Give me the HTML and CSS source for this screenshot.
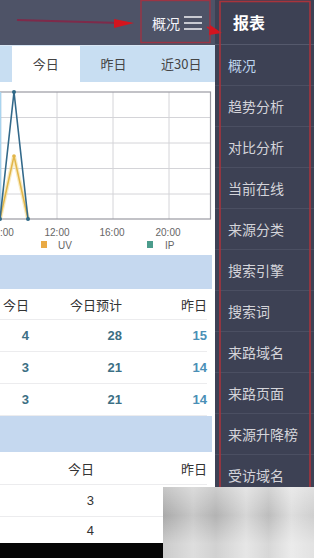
FILE: index.html
```html
<!DOCTYPE html>
<html lang="zh-CN">
    <head>
        <meta charset="utf-8">
        <title>概况</title>
        <link rel="stylesheet" href="styles.css">
    </head>
    <body>
        <div class="screen">
            <!-- Main report column -->
            <div class="main">
                <div class="topbar">
                    <span class="topbar-title">概况</span>
                    <svg class="menu-icon" width="20" height="18" viewBox="0 0 20 18">
                        <path d="M1 3H19M1 9H19M1 15H19" stroke="#f2f2f6" stroke-width="1.3"/>
                    </svg>
                </div>
                <div class="tabs">
                    <span class="tab tab-active">今日</span>
                    <span class="tab">昨日</span>
                    <span class="tab">近30日</span>
                </div>
                <div class="chart">
                    <svg width="215" height="173" viewBox="0 0 215 173">
                        <g stroke="#d4d4d8" stroke-width="1" fill="none">
                            <path d="M0 35.5H210M0 61H210M0 86.5H210M0 112H210"/>
                            <path d="M57 10V137M113 10V137M169 10V137"/>
                        </g>
                        <rect x="0.5" y="10" width="210" height="127" fill="none" stroke="#9a9aa2" stroke-width="1.2"/>
                        <path d="M0.5 10V137" stroke="#a9d4ef" stroke-width="1.5"/>
                        <polyline points="0,137 14,74 28,137" fill="none" stroke="#f3dd9a" stroke-width="4" opacity="0.6"/>
                        <polyline points="0,137 14,74 28,137" fill="none" stroke="#e2b64a" stroke-width="1.5"/>
                        <polyline points="0,137 14,10 28,137" fill="none" stroke="#33698a" stroke-width="1.6"/>
                        <g fill="#2f6886">
                            <circle cx="14" cy="10" r="2"/>
                            <circle cx="28" cy="137" r="2"/>
                            <circle cx="0" cy="137" r="2"/>
                        </g>
                        <circle cx="14" cy="74" r="1.8" fill="#e2b64a"/>
                        <g class="axis-label">
                            <text x="0" y="154">:00</text>
                            <text x="57" y="154" text-anchor="middle">12:00</text>
                            <text x="112" y="154" text-anchor="middle">16:00</text>
                            <text x="168" y="154" text-anchor="middle">20:00</text>
                            <text x="58" y="167">UV</text>
                            <text x="165" y="167">IP</text>
                        </g>
                        <rect x="41" y="159" width="6" height="7" fill="#e9aa45"/>
                        <rect x="147" y="159" width="6" height="7" fill="#4b9c8c"/>
                    </svg>
                </div>

                <div class="band"></div>
                <div class="table table-three">
                    <div class="row row-head">
                        <span>今日</span><span>今日预计</span><span>昨日</span>
                    </div>
                    <div class="row">
                        <span class="num">4</span><span class="num">28</span><span class="num num-light">15</span>
                    </div>
                    <div class="row">
                        <span class="num">3</span><span class="num">21</span><span class="num num-light">14</span>
                    </div>
                    <div class="row">
                        <span class="num">3</span><span class="num">21</span><span class="num num-light">14</span>
                    </div>
                </div>

                <div class="band band-tall"></div>
                <div class="table table-two">
                    <div class="row row-head row-tall">
                        <span>今日</span><span>昨日</span>
                    </div>
                    <div class="row">
                        <span class="plain">3</span><span></span>
                    </div>
                    <div class="row row-short">
                        <span class="plain">4</span><span></span>
                    </div>
                </div>
                <div class="navbar"></div>
            </div>

            <!-- Report drawer -->
            <div class="drawer">
                <div class="drawer-head">报表</div>
                <ul class="drawer-list">
                    <li class="drawer-item active">概况</li>
                    <li class="drawer-item">趋势分析</li>
                    <li class="drawer-item">对比分析</li>
                    <li class="drawer-item">当前在线</li>
                    <li class="drawer-item">来源分类</li>
                    <li class="drawer-item">搜索引擎</li>
                    <li class="drawer-item">搜索词</li>
                    <li class="drawer-item">来路域名</li>
                    <li class="drawer-item">来路页面</li>
                    <li class="drawer-item">来源升降榜</li>
                    <li class="drawer-item">受访域名</li>
                </ul>
            </div>

            <!-- Red annotation marks -->
            <svg class="marks" width="314" height="558" viewBox="0 0 314 558">
                <path d="M17 20L120 23" stroke="#7e2a4a" stroke-width="2" fill="none"/>
                <path d="M114 19L134 23L114 28Z" fill="#d4141e"/>
                <rect x="141" y="0.5" width="69" height="42" fill="none" stroke="#9c3444" stroke-width="1.4"/>
                <path d="M207 27L214 31" stroke="#c02030" stroke-width="2"/>
                <path d="M210 25L222 33L209 35Z" fill="#d4141e"/>
                <rect x="220" y="1.5" width="90" height="553" fill="none" stroke="#a8343c" stroke-width="1.6"/>
            </svg>

            <!-- Watermark over the corner -->
            <div class="watermark"></div>
        </div>
    </body>
</html>
```

FILE: styles.css
```css
body { margin: 0; background: #fff; font-family: "Noto Sans CJK SC", "Noto Sans", sans-serif; color: #333; }
.screen { position: relative; display: flex; width: 314px; height: 558px; overflow: hidden; }

/* Main column */
.main { width: 215px; flex: none; display: flex; flex-direction: column; background: #fff; }
.topbar {
    height: 45px;
    background: #4e5367;
    display: flex;
    align-items: center;
    justify-content: flex-end;
    padding-right: 12px;
    gap: 3px;
}
.topbar-title { color: #f4f4f8; font-size: 14px; margin-top: 1px; }
.menu-icon { display: block; }

.tabs {
    height: 37px;
    background: #c8def2;
    display: flex;
    align-items: center;
    padding-left: 12px;
    border-top: 1px solid #d8e6f4;
    box-sizing: border-box;
}
.tab { width: 68px; text-align: center; font-size: 13px; color: #444; line-height: 36px; }
.tab-active { background: #fff; }

.chart { height: 173px; }
.chart svg { display: block; }
.axis-label { font-family: "Liberation Sans", Arial, sans-serif; font-size: 10px; fill: #666; }

.band { height: 34px; background: #c5d8ef; margin-right: 3px; }
.band-tall { height: 36px; }

/* Tables */
.table { margin-right: 8px; }
.row {
    display: grid;
    height: 32px;
    align-items: center;
    border-bottom: 1px solid #ececee;
    box-sizing: border-box;
    font-size: 13px;
}
.row span { text-align: right; }
.row-head { height: 31px; color: #333; }
.row-tall { height: 33px; }
.row-short { height: 26px; border-bottom: none; }
.table-three .row { grid-template-columns: 29px 93px 85px; }
.table-two .row { grid-template-columns: 94px 113px; }
.num { font-family: "Liberation Sans", Arial, sans-serif; font-weight: bold; color: #3c6f84; font-size: 13px; }
.num-light { color: #4a8fb6; }
.plain { font-family: "Liberation Sans", Arial, sans-serif; color: #333; font-size: 13px; }
.navbar { flex: 1; background: #050505; }

/* Drawer */
.drawer { flex: 1; background: #3d4154; color: #d4d4da; }
.drawer-head {
    height: 45px;
    box-sizing: border-box;
    padding-left: 18px;
    font-size: 16px;
    font-weight: bold;
    color: #fff;
    line-height: 45px;
    border-bottom: 1px solid #55596c;
}
.drawer-list { list-style: none; margin: 0; padding: 0; }
.drawer-item {
    height: 41px;
    box-sizing: border-box;
    padding-left: 13px;
    line-height: 40px;
    font-size: 14px;
    border-bottom: 1px solid #4b4f62;
}
.drawer-item.active { color: #bcd3ec; }

.watermark {
    position: absolute;
    left: 163px;
    top: 487px;
    width: 151px;
    height: 71px;
    background:
        linear-gradient(180deg, rgba(255,255,255,0.35), rgba(200,200,200,0) 40%, rgba(255,255,255,0.4) 80%),
        linear-gradient(90deg, #a9a9a9 0%, #c8c8c8 20%, #b3b3b3 35%, #d6d6d6 55%, #bdbdbd 70%, #dedede 85%, #cfcfcf 100%);
}
.marks { position: absolute; left: 0; top: 0; pointer-events: none; }
```
